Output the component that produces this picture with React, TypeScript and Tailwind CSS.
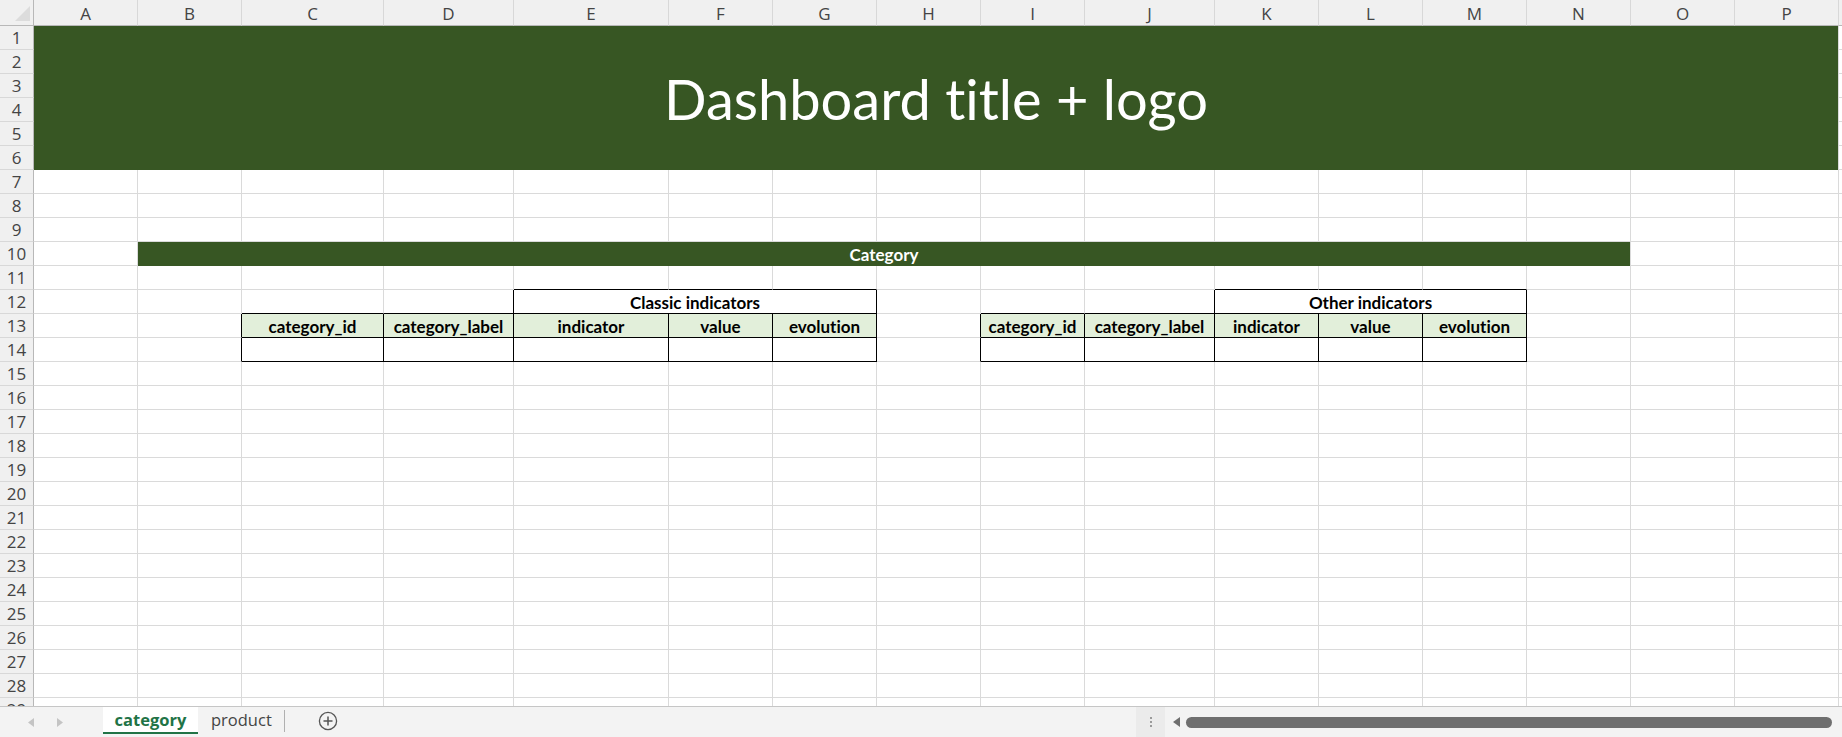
import type { ReactNode } from "react";

const COLS = [
  { l: "A", w: 104 },
  { l: "B", w: 104 },
  { l: "C", w: 142 },
  { l: "D", w: 130 },
  { l: "E", w: 155 },
  { l: "F", w: 104 },
  { l: "G", w: 104 },
  { l: "H", w: 104 },
  { l: "I", w: 104 },
  { l: "J", w: 130 },
  { l: "K", w: 104 },
  { l: "L", w: 104 },
  { l: "M", w: 104 },
  { l: "N", w: 104 },
  { l: "O", w: 104 },
  { l: "P", w: 104 },
  { l: "", w: 104 },
];

const HEADERS = ["category_id", "category_label", "indicator", "value", "evolution"];

// tables: left one C..G, right one I..M (1-based column index, A = 1)
function inTable(r: number, c: number) {
  if (r === 12) return (c >= 5 && c <= 7) || (c >= 11 && c <= 13);
  if (r === 13 || r === 14) return (c >= 3 && c <= 7) || (c >= 9 && c <= 13);
  return false;
}

function headerLabel(r: number, c: number) {
  if (r !== 13) return null;
  if (c >= 3 && c <= 7) return HEADERS[c - 3];
  if (c >= 9 && c <= 13) return HEADERS[c - 9];
  return null;
}

const cellFont = { fontFamily: "Lato, 'Liberation Sans', sans-serif" };
const uiFont = { fontFamily: "'Open Sans', 'Noto Sans', sans-serif" };

function Cell({
  r,
  c,
  span,
  children,
}: {
  r: number;
  c: number;
  span?: boolean;
  children?: ReactNode;
}) {
  const lastC = span ? c + 2 : c;
  const rightBlack = inTable(r, lastC) || inTable(r, lastC + 1);
  const bottomBlack = inTable(r, c) || inTable(r + 1, c);
  const fill = r === 13 && inTable(r, c) ? "bg-[#e2efda]" : "bg-white";

  return (
    <div
      className={`${span ? "col-span-3" : ""} ${fill} flex items-center justify-center pt-[2px] border-r border-b ${
        rightBlack ? "border-r-black" : "border-r-[#dadada]"
      } ${bottomBlack ? "border-b-black" : "border-b-[#dadada]"} text-[17px] font-bold text-black leading-none [font-variant-ligatures:none]`}
      style={cellFont}
    >
      {children}
    </div>
  );
}

function RowHead({ n }: { n: number }) {
  return (
    <div
      className="flex items-center justify-center bg-[#f0f0f0] border-r border-b border-r-[#b8b8b8] border-b-[#d8d8d8] text-[17px] text-[#444]"
      style={uiFont}
    >
      {n}
    </div>
  );
}

function buildGrid() {
  const cells: ReactNode[] = [];

  // column header row
  cells.push(
    <div
      key="corner"
      className="flex items-end justify-end bg-[#f0f0f0] border-r border-b border-r-[#b8b8b8] border-b-[#b8b8b8] pr-[3px] pb-[4px]"
    >
      <svg width="15" height="15" viewBox="0 0 15 15">
        <polygon points="15,0 15,15 0,15" fill="#dcdcdc" />
      </svg>
    </div>
  );
  COLS.forEach((col, i) =>
    cells.push(
      <div
        key={`h-${i}`}
        className="flex items-center justify-center pt-[2px] bg-[#f0f0f0] border-r border-b border-r-[#d8d8d8] border-b-[#b8b8b8] text-[17px] text-[#444]"
        style={uiFont}
      >
        {col.l}
      </div>
    )
  );

  for (let r = 1; r <= 29; r++) {
    cells.push(<RowHead key={`rh-${r}`} n={r} />);

    if (r === 1) {
      cells.push(
        <div
          key="title"
          className="col-span-16 row-span-6 flex items-center justify-center bg-[#375623] border-r border-r-[#dadada] pt-[1px] text-[56px] text-white [font-variant-ligatures:none]"
          style={cellFont}
        >
          Dashboard title + logo
        </div>
      );
    }
    if (r <= 6) {
      cells.push(<Cell key={`c-${r}-17`} r={r} c={17} />);
      continue;
    }

    if (r === 10) {
      cells.push(<Cell key="c-10-1" r={10} c={1} />);
      cells.push(
        <div
          key="category"
          className="col-span-13 flex items-center justify-center pt-[2px] bg-[#375623] border-r border-r-[#dadada] text-[17px] font-bold text-white"
          style={cellFont}
        >
          Category
        </div>
      );
      for (let c = 15; c <= 17; c++) cells.push(<Cell key={`c-10-${c}`} r={10} c={c} />);
      continue;
    }

    for (let c = 1; c <= 17; c++) {
      if (r === 12 && (c === 5 || c === 11)) {
        cells.push(
          <Cell key={`c-${r}-${c}`} r={r} c={c} span>
            {c === 5 ? "Classic indicators" : "Other indicators"}
          </Cell>
        );
        c += 2;
        continue;
      }
      cells.push(
        <Cell key={`c-${r}-${c}`} r={r} c={c}>
          {headerLabel(r, c)}
        </Cell>
      );
    }
  }
  return cells;
}

function PlusCircle() {
  return (
    <svg width="20" height="20" viewBox="0 0 20 20" fill="none" stroke="#555" strokeWidth="1.3">
      <circle cx="10" cy="10" r="8.6" />
      <path d="M10 5.5v9M5.5 10h9" strokeWidth="1.5" />
    </svg>
  );
}

function SheetBar() {
  return (
    <div className="flex h-[31px] items-stretch border-t border-[#c6c6c6] bg-[#f3f3f3]" style={uiFont}>
      <div className="flex w-[103px] items-center gap-[23px] pl-[28px]">
        <svg width="6" height="9" viewBox="0 0 6 9">
          <polygon points="6,0 6,9 0,4.5" fill="#c4c4c4" />
        </svg>
        <svg width="6" height="9" viewBox="0 0 6 9">
          <polygon points="0,0 0,9 6,4.5" fill="#c4c4c4" />
        </svg>
      </div>
      <div className="flex w-[95px] items-center justify-center border-b-2 border-[#217346] bg-white mb-[3px] pt-[1px] text-[16.5px] font-bold text-[#217346]">
        category
      </div>
      <div className="flex w-[86px] items-center pl-[13px] mb-[3px] text-[16.5px] text-[#444]">product</div>
      <div className="mt-[3px] mb-[5px] w-px bg-[#b0b0b0]" />
      <div className="flex items-center pl-[33px] mb-[2px]">
        <PlusCircle />
      </div>
      <div className="flex-1" />
      <div className="flex items-center">
        <div className="flex h-full w-[29px] flex-col items-center justify-center gap-[2px] bg-[#ebebeb]">
          <span className="h-[2px] w-[2px] bg-[#9a9a9a]" />
          <span className="h-[2px] w-[2px] bg-[#9a9a9a]" />
          <span className="h-[2px] w-[2px] bg-[#9a9a9a]" />
        </div>
        <svg className="ml-[8px]" width="7" height="10" viewBox="0 0 7 10">
          <polygon points="7,0 7,10 0,5" fill="#6f6f6f" />
        </svg>
        <div className="ml-[6px] mr-[10px] h-[11px] w-[646px] rounded-full bg-[#6f6f6f]" />
      </div>
    </div>
  );
}

export default function App() {
  return (
    <div className="w-[1842px] h-[737px] overflow-hidden bg-white flex flex-col">
      <div className="h-[706px] overflow-hidden">
        <div className="grid w-max grid-cols-[34px_104px_104px_142px_130px_155px_104px_104px_104px_104px_130px_104px_104px_104px_104px_104px_104px_104px] grid-rows-[26px] auto-rows-[24px]">
          {buildGrid()}
        </div>
      </div>
      <SheetBar />
      <div className="flex-1 bg-[#fafafa]" />
    </div>
  );
}
